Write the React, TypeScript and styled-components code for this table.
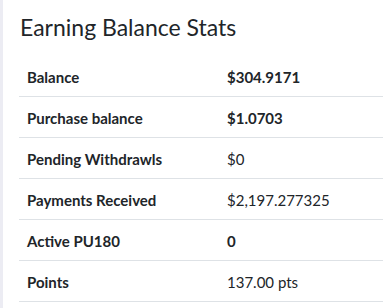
import React from "react";
import styled, { createGlobalStyle } from "styled-components";

const Global = createGlobalStyle`
  html, body { margin: 0; padding: 0; background: #ffffff; }
  body { font-family: "Source Sans Pro", Lato, "Liberation Sans", sans-serif; color: #212529; }
`;

const Page = styled.div`
  display: flex;
  min-height: 308px;
`;

const Rail = styled.div`
  width: 3px;
  background: #ececf3;
  flex: none;
`;

const Card = styled.section`
  flex: 1;
  padding: 12px 0 0 16px;
`;

const Title = styled.h4`
  margin: 0 0 14px 1px;
  font-size: 23px;
  font-weight: 400;
  line-height: 30px;
  color: #212529;
`;

const Table = styled.table`
  width: 100%;
  border-collapse: collapse;
  table-layout: fixed;
  font-size: 15px;
`;

const Row = styled.tr`
  border-bottom: 1px solid #dee2e6;
`;

const Label = styled.th`
  text-align: left;
  font-weight: 700;
  padding: 2px 8px 0 8px;
  height: 38px;
  width: 184px;
`;

const Value = styled.td<{ $bold?: boolean }>`
  font-weight: ${(p) => (p.$bold ? 700 : 400)};
  padding: 2px 8px 0 8px;
  height: 38px;
`;

const rows: { label: string; value: string; bold?: boolean }[] = [
  { label: "Balance", value: "$304.9171", bold: true },
  { label: "Purchase balance", value: "$1.0703", bold: true },
  { label: "Pending Withdrawls", value: "$0" },
  { label: "Payments Received", value: "$2,197.277325" },
  { label: "Active PU180", value: "0", bold: true },
  { label: "Points", value: "137.00 pts" },
];

export default function App() {
  return (
    <>
      <Global />
      <Page>
        <Rail />
        <Card>
          <Title>Earning Balance Stats</Title>
          <Table>
            <tbody>
              {rows.map((r) => (
                <Row key={r.label}>
                  <Label>{r.label}</Label>
                  <Value $bold={r.bold}>{r.value}</Value>
                </Row>
              ))}
            </tbody>
          </Table>
        </Card>
      </Page>
    </>
  );
}
